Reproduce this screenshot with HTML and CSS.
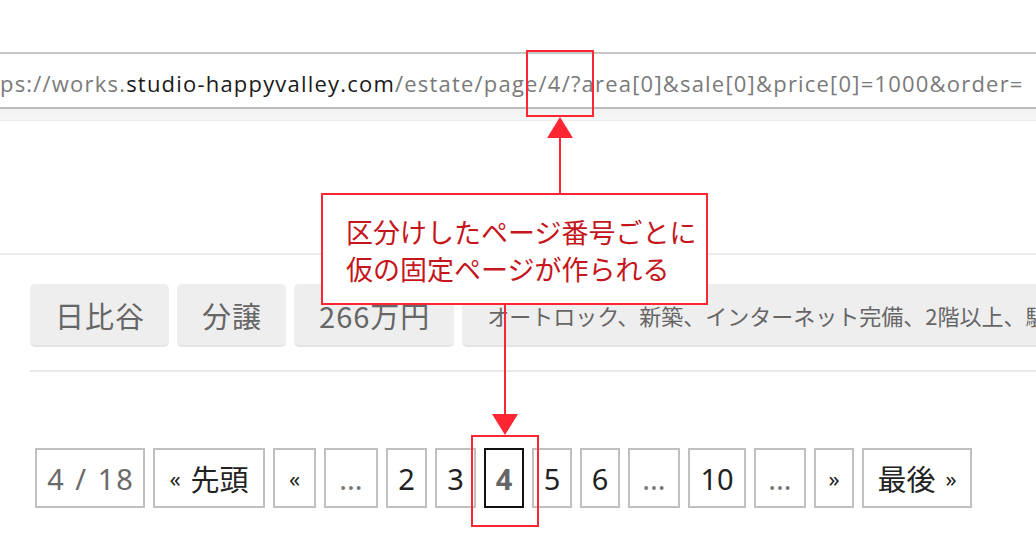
FILE: index.html
```html
<!DOCTYPE html>
<html lang="ja">
<head>
<meta charset="utf-8">
<link rel="stylesheet" href="styles.css">
</head>
<body>
<div class="page">
  <div class="urlbar">
    <div class="url"><span class="dim">ps://works.</span><span class="host">studio-happyvalley.com</span><span class="dim">/estate/page/4/?area[0]&amp;sale[0]&amp;price[0]=1000&amp;order=</span></div>
  </div>
  <div class="urlshade"></div>
  <div class="blank"></div>
  <div class="rule"></div>
  <div class="content">
    <div class="tags">
      <span class="tag">日比谷</span>
      <span class="tag">分譲</span>
      <span class="tag">266万円</span>
      <span class="tag small">オートロック、新築、インターネット完備、2階以上、駅近</span>
    </div>
    <div class="rule2"></div>
    <nav class="pager">
      <span class="pg count">4 / 18</span>
      <span class="pg wide"><span class="ar first">«</span>先頭</span>
      <span class="pg arrow w43">«</span>
      <span class="pg dots w54">...</span>
      <span class="pg num w41">2</span>
      <span class="pg num w41">3</span>
      <span class="pg num current">4</span>
      <span class="pg num">5</span>
      <span class="pg num">6</span>
      <span class="pg dots">...</span>
      <span class="pg ten">10</span>
      <span class="pg dots">...</span>
      <span class="pg arrow">»</span>
      <span class="pg last">最後<span class="ar after">»</span></span>
    </nav>
  </div>

  <div class="hl hl-url"></div>
  <div class="hl hl-page"></div>
  <div class="note">区分けしたページ番号ごとに<br>仮の固定ページが作られる</div>
  <div class="line line-up"></div>
  <div class="tri tri-up"></div>
  <div class="line line-down"></div>
  <div class="tri tri-down"></div>
</div>
</body>
</html>
```
FILE: styles.css
```css
html, body {
  margin: 0;
  padding: 0;
  background: #ffffff;
}
body {
  width: 1036px;
  height: 560px;
  overflow: hidden;
  font-family: "Noto Sans", "Noto Sans CJK JP", sans-serif;
}
.page {
  position: relative;
  width: 1036px;
  height: 560px;
  overflow: hidden;
}
.urlbar {
  margin-top: 52px;
  height: 53px;
  border-top: 2px solid #c6c6c6;
  border-bottom: 2px solid #bdbdbd;
  display: flex;
  align-items: center;
  overflow: hidden;
}
.url {
  white-space: nowrap;
  font-family: "Open Sans", "Noto Sans", sans-serif;
  font-size: 22px;
  letter-spacing: 1.2px;
  padding-top: 5px;
  color: #7a7a7a;
}
.url .host {
  color: #1a1a1a;
}
.urlshade {
  height: 11px;
  background: linear-gradient(#f2f2f2, #f6f6f6);
  border-bottom: 1px solid #ececec;
}
.blank {
  height: 132px;
}
.rule {
  height: 2px;
  background: #ececec;
}
.content {
  padding: 29px 0 0 30px;
}
.tags {
  display: flex;
  gap: 8px;
  white-space: nowrap;
}
.tag {
  flex: none;
  height: 63px;
  box-sizing: border-box;
  padding: 0 24px 0 25px;
  background: #eeeeee;
  border-radius: 5px;
  border-bottom: 2px solid #e4e4e4;
  font-family: "Noto Sans CJK JP", sans-serif;
  font-size: 29px;
  letter-spacing: 1px;
  color: #666666;
  display: flex;
  align-items: center;
}
.tag.small {
  font-size: 22px;
  letter-spacing: 0;
}
.rule2 {
  margin-top: 23px;
  height: 2px;
  background: #e9e9e9;
}
.pager {
  display: flex;
  gap: 8px;
  margin-top: 76px;
  margin-left: 5px;
}
.pg {
  flex: none;
  width: 40px;
  height: 60px;
  box-sizing: border-box;
  border: 2px solid #c0c0c0;
  display: flex;
  align-items: center;
  justify-content: center;
  font-family: "Noto Sans", "Noto Sans CJK JP", sans-serif;
  font-size: 29px;
  color: #222222;
  white-space: nowrap;
}
.pg .ar {
  font-size: 22px;
}
.pg .ar.first {
  margin-right: 10px;
}
.pg .ar.after {
  margin-left: 10px;
}
.pg.count {
  color: #6a6a6a;
  width: 110px;
  letter-spacing: 2px;
  padding-left: 2px;
}
.pg.wide {
  width: 112px;
}
.pg.last {
  width: 110px;
}
.pg.ten {
  width: 58px;
}
.pg.arrow {
  font-size: 22px;
}
.pg.dots {
  color: #777777;
  width: 52px;
}
.pg.w43 { width: 43px; }
.pg.w54 { width: 54px; }
.pg.w41 { width: 41px; }
.pg.current {
  border-color: #111111;
  color: #666666;
  font-weight: bold;
}

/* annotations */
.hl {
  position: absolute;
  border: 2px solid #ff2633;
  box-sizing: border-box;
}
.hl-url {
  left: 526px;
  top: 50px;
  width: 68px;
  height: 67px;
}
.hl-page {
  left: 471px;
  top: 435px;
  width: 68px;
  height: 92px;
}
.note {
  position: absolute;
  left: 321px;
  top: 193px;
  width: 387px;
  height: 112px;
  box-sizing: border-box;
  border: 2px solid #ff2633;
  background: #ffffff;
  padding: 18px 0 0 23px;
  font-family: "Noto Sans CJK JP", sans-serif;
  font-size: 27px;
  line-height: 37px;
  color: #c4161c;
  white-space: nowrap;
}
.line {
  position: absolute;
  width: 2px;
  background: #ff2633;
}
.line-up {
  left: 559px;
  top: 134px;
  height: 60px;
}
.line-down {
  left: 504px;
  top: 304px;
  height: 112px;
}
.tri {
  position: absolute;
  width: 0;
  height: 0;
  border-left: 13px solid transparent;
  border-right: 13px solid transparent;
}
.tri-up {
  left: 547px;
  top: 117px;
  border-bottom: 21px solid #ff2633;
}
.tri-down {
  left: 492px;
  top: 414px;
  border-top: 21px solid #ff2633;
}
```
